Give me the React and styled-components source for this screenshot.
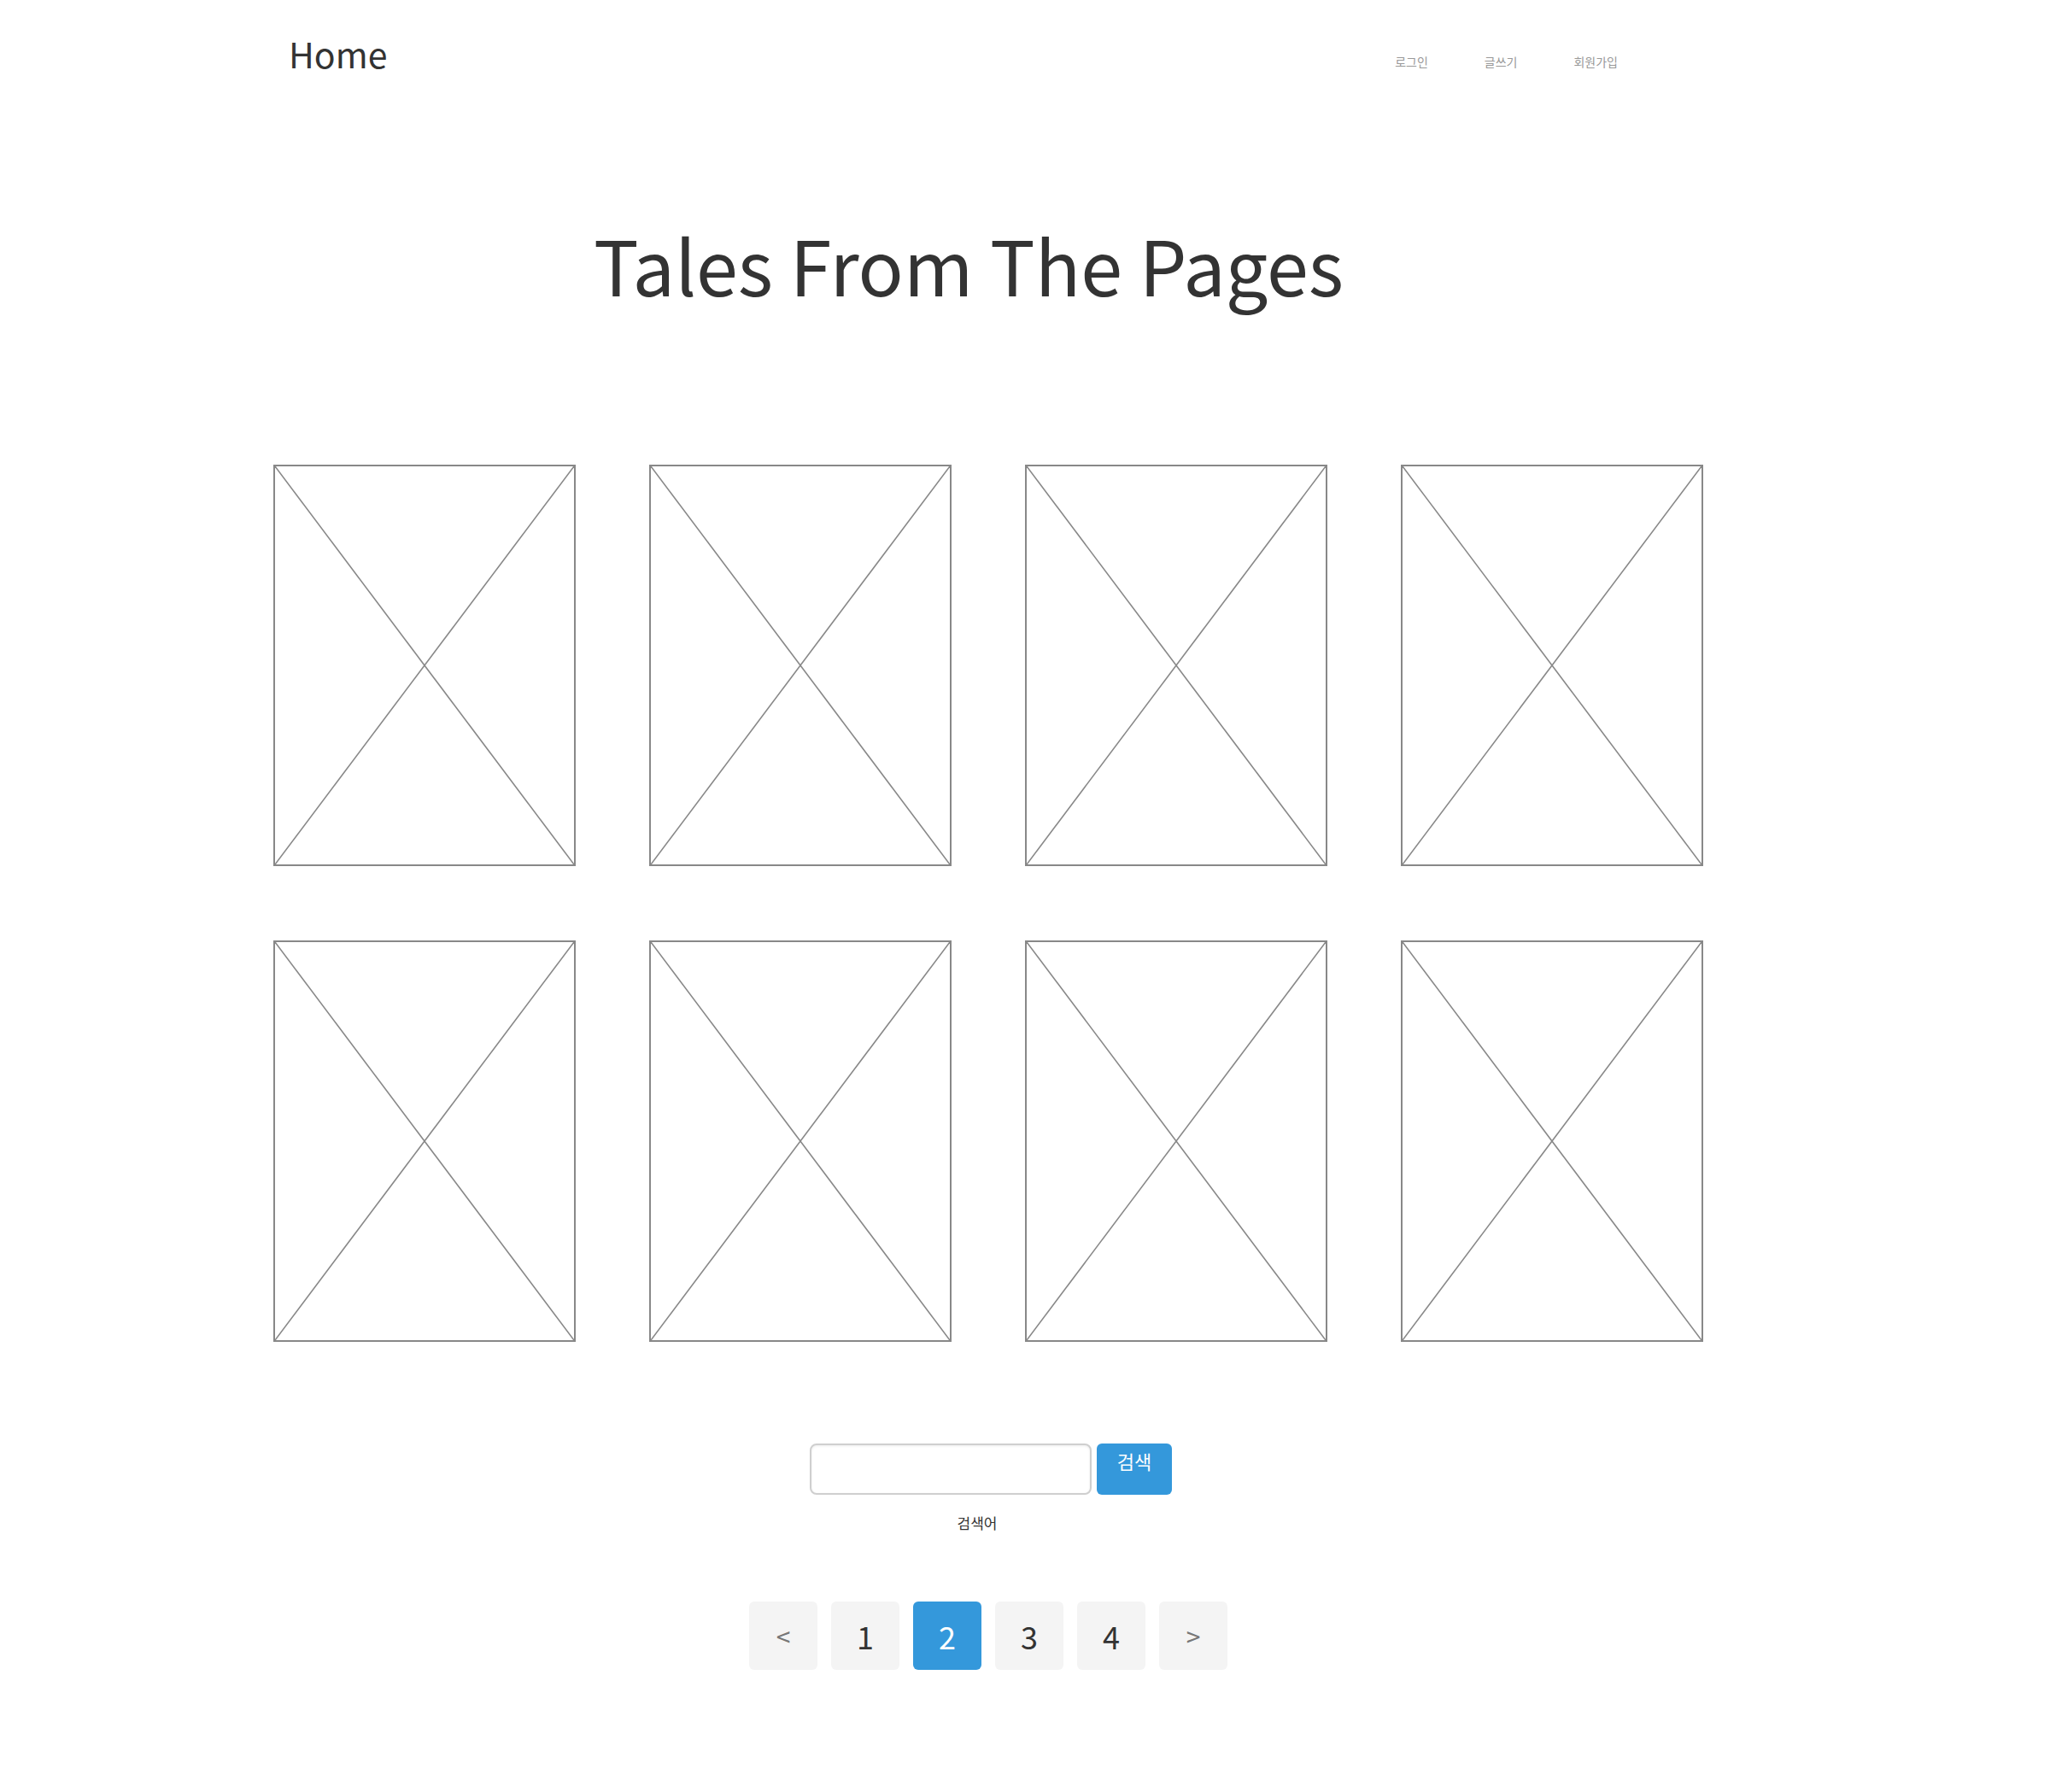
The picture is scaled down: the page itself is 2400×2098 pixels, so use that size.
import React from 'react'
import styled, { createGlobalStyle } from 'styled-components'

const GlobalStyle = createGlobalStyle`
  body {
    margin: 0;
    background: #fff;
    font-family: "Noto Sans CJK KR", "Noto Sans", sans-serif;
    color: #333;
  }
`

const Page = styled.div`
  width: 1674px;
  min-height: 2098px;
  margin-left: 320px;
  display: flex;
  flex-direction: column;
`

const Header = styled.header`
  display: flex;
  justify-content: space-between;
  align-items: flex-start;
  padding: 42px 100px 0 18px;
`

const Logo = styled.a`
  font-size: 41px;
  line-height: 1;
  color: #333;
  text-decoration: none;
`

const Nav = styled.nav`
  display: flex;
  gap: 66px;
  padding-top: 23px;
`

const NavLink = styled.a`
  font-size: 14px;
  line-height: 1;
  color: #999;
  text-decoration: none;
`

const Title = styled.h1`
  margin: 182px 0 0;
  padding-right: 46px;
  font-size: 88px;
  font-weight: 400;
  line-height: 1;
  text-align: center;
  color: #333;
`

const Grid = styled.section`
  margin-top: 191px;
  display: grid;
  grid-template-columns: repeat(4, 354px);
  justify-content: space-between;
  row-gap: 87px;
`

const Card = styled.div`
  box-sizing: border-box;
  height: 470px;
  border: 2px solid #888;
  display: flex;
`

const Placeholder = styled.svg`
  width: 100%;
  height: 100%;
  display: block;
`

const SearchRow = styled.form`
  margin-top: 119px;
  padding-left: 6px;
  display: flex;
  justify-content: center;
  gap: 6px;
`

const SearchInput = styled.input`
  box-sizing: border-box;
  width: 330px;
  height: 60px;
  border: 2px solid #cfcfcf;
  border-radius: 8px;
  box-shadow: inset 0 1px 3px rgba(0, 0, 0, 0.08);
  outline: none;
`

const SearchButton = styled.button`
  box-sizing: border-box;
  width: 88px;
  height: 60px;
  border: none;
  border-radius: 6px;
  background: #3498db;
  color: #fff;
  font-family: inherit;
  font-size: 22px;
  line-height: 1;
  display: flex;
  align-items: flex-start;
  justify-content: center;
  padding-top: 9px;
`

const Caption = styled.p`
  margin: 24px 0 0;
  padding-right: 26px;
  font-size: 17px;
  line-height: 1;
  text-align: center;
  color: #333;
`

const Pagination = styled.div`
  margin-top: 84px;
  display: flex;
  justify-content: center;
  gap: 16px;
`

const PageButton = styled.button`
  width: 80px;
  height: 80px;
  border: none;
  border-radius: 6px;
  background: ${p => (p.$active ? '#3498db' : '#f4f4f4')};
  color: ${p => (p.$active ? '#fff' : p.$arrow ? '#777' : '#333')};
  font-family: inherit;
  font-size: ${p => (p.$arrow ? '30px' : '36px')};
  line-height: 1;
  display: flex;
  align-items: center;
  justify-content: center;
  padding: 0;
`

const cards = Array.from({ length: 8 }, (_, i) => i)
const pages = ['1', '2', '3', '4']

const App = () => {
  return (
    <>
      <GlobalStyle />
      <Page>
        <Header>
          <Logo href="#">Home</Logo>
          <Nav>
            <NavLink href="#">로그인</NavLink>
            <NavLink href="#">글쓰기</NavLink>
            <NavLink href="#">회원가입</NavLink>
          </Nav>
        </Header>

        <Title>Tales From The Pages</Title>

        <Grid>
          {cards.map(i => (
            <Card key={i}>
              <Placeholder viewBox="0 0 100 100" preserveAspectRatio="none">
                <line x1="0" y1="0" x2="100" y2="100" stroke="#888" strokeWidth="1.6" vectorEffect="non-scaling-stroke" />
                <line x1="100" y1="0" x2="0" y2="100" stroke="#888" strokeWidth="1.6" vectorEffect="non-scaling-stroke" />
              </Placeholder>
            </Card>
          ))}
        </Grid>

        <SearchRow onSubmit={e => e.preventDefault()}>
          <SearchInput type="text" />
          <SearchButton type="submit">검색</SearchButton>
        </SearchRow>
        <Caption>검색어</Caption>

        <Pagination>
          <PageButton $arrow>&lt;</PageButton>
          {pages.map(p => (
            <PageButton key={p} $active={p === '2'}>{p}</PageButton>
          ))}
          <PageButton $arrow>&gt;</PageButton>
        </Pagination>
      </Page>
    </>
  )
}

export default App
